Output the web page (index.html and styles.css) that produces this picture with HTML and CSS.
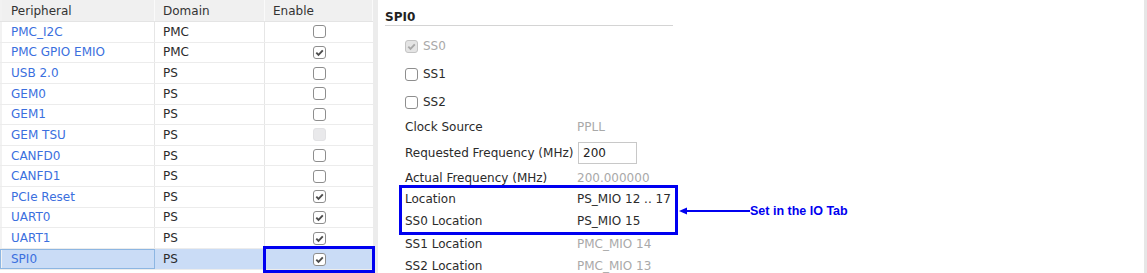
FILE: index.html
```html
<!DOCTYPE html>
<html lang="en">
<head>
    <meta charset="UTF-8">
    <title>SPI0 - Peripheral Configuration</title>
    <link rel="stylesheet" href="styles.css">
</head>
<body>
    <!-- shared checkbox shapes -->
    <svg class="defs" width="0" height="0">
        <symbol id="box" viewBox="0 0 13 13">
            <rect x="0.5" y="0.5" width="12" height="12" rx="2.5" fill="#fff" stroke="#8e8e8e"/>
        </symbol>
        <symbol id="tick" viewBox="0 0 13 13">
            <rect x="0.5" y="0.5" width="12" height="12" rx="2.5" fill="#fff" stroke="#8e8e8e"/>
            <path d="M3.3 6.6 L5.5 8.8 L9.8 4.3" fill="none" stroke="#4d4d4d" stroke-width="1.9"/>
        </symbol>
        <symbol id="off" viewBox="0 0 13 13">
            <rect x="0.5" y="0.5" width="12" height="12" rx="2.5" fill="#e9e9eb" stroke="#e2e2e4"/>
        </symbol>
        <symbol id="tickoff" viewBox="0 0 13 13">
            <rect x="0.5" y="0.5" width="12" height="12" rx="2.5" fill="#e4e4e4" stroke="#c4c4c4"/>
            <path d="M3.3 6.6 L5.5 8.8 L9.8 4.3" fill="none" stroke="#a8a8a8" stroke-width="1.9"/>
        </symbol>
    </svg>

    <div class="page">
        <!-- peripheral list -->
        <div class="grid">
            <div class="row head">
                <div class="cell">Peripheral</div>
                <div class="cell">Domain</div>
                <div class="cell">Enable</div>
            </div>
            <div class="row"><div class="cell link">PMC_I2C</div><div class="cell">PMC</div><div class="cell chk"><svg class="cb"><use href="#box"/></svg></div></div>
            <div class="row"><div class="cell link">PMC GPIO EMIO</div><div class="cell">PMC</div><div class="cell chk"><svg class="cb"><use href="#tick"/></svg></div></div>
            <div class="row"><div class="cell link">USB 2.0</div><div class="cell">PS</div><div class="cell chk"><svg class="cb"><use href="#box"/></svg></div></div>
            <div class="row"><div class="cell link">GEM0</div><div class="cell">PS</div><div class="cell chk"><svg class="cb"><use href="#box"/></svg></div></div>
            <div class="row"><div class="cell link">GEM1</div><div class="cell">PS</div><div class="cell chk"><svg class="cb"><use href="#box"/></svg></div></div>
            <div class="row"><div class="cell link">GEM TSU</div><div class="cell">PS</div><div class="cell chk"><svg class="cb"><use href="#off"/></svg></div></div>
            <div class="row"><div class="cell link">CANFD0</div><div class="cell">PS</div><div class="cell chk"><svg class="cb"><use href="#box"/></svg></div></div>
            <div class="row"><div class="cell link">CANFD1</div><div class="cell">PS</div><div class="cell chk"><svg class="cb"><use href="#box"/></svg></div></div>
            <div class="row"><div class="cell link">PCIe Reset</div><div class="cell">PS</div><div class="cell chk"><svg class="cb"><use href="#tick"/></svg></div></div>
            <div class="row"><div class="cell link">UART0</div><div class="cell">PS</div><div class="cell chk"><svg class="cb"><use href="#tick"/></svg></div></div>
            <div class="row"><div class="cell link">UART1</div><div class="cell">PS</div><div class="cell chk"><svg class="cb"><use href="#tick"/></svg></div></div>
            <div class="row selected"><div class="cell link focus">SPI0</div><div class="cell">PS</div><div class="cell chk marked"><svg class="cb"><use href="#tick"/></svg></div></div>
        </div>

        <div class="splitter"></div>

        <!-- properties of the selected peripheral -->
        <div class="panel">
            <div class="title">SPI0</div>
            <div class="opts">
                <div class="opt dim"><svg class="cb"><use href="#tickoff"/></svg>SS0</div>
                <div class="opt"><svg class="cb"><use href="#box"/></svg>SS1</div>
                <div class="opt"><svg class="cb"><use href="#box"/></svg>SS2</div>
            </div>
            <div class="prop"><span class="label">Clock Source</span><span class="value dim">PPLL</span></div>
            <div class="prop tall"><span class="label">Requested Frequency (MHz)</span><span class="field">200</span></div>
            <div class="prop short"><span class="label">Actual Frequency (MHz)</span><span class="value dim">200.000000</span></div>
            <div class="note">
                <div class="mark">
                    <div class="prop"><span class="label">Location</span><span class="value">PS_MIO 12 .. 17</span></div>
                    <div class="prop"><span class="label">SS0 Location</span><span class="value">PS_MIO 15</span></div>
                </div>
                <svg class="arrow" width="72" height="10" viewBox="0 0 72 10">
                    <path d="M7 5 H72" stroke="#0000f0" stroke-width="2"/>
                    <path d="M1 5 L9 1.5 L9 8.5 Z" fill="#0000f0"/>
                </svg>
                <span class="hint">Set in the IO Tab</span>
            </div>
            <div class="prop"><span class="label">SS1 Location</span><span class="value dim">PMC_MIO 14</span></div>
            <div class="prop"><span class="label">SS2 Location</span><span class="value dim">PMC_MIO 13</span></div>
        </div>

        <div class="edge"></div>
    </div>
</body>
</html>
```

FILE: styles.css
```css
body {
    margin: 0;
    background: #fff;
    font-family: "DejaVu Sans", Verdana, sans-serif;
    font-size: 12px;
    color: #2b2b2b;
    overflow: hidden;
}
.defs {
    position: absolute;
}
.page {
    display: flex;
    height: 273px;
}

/* table on the left */
.grid {
    width: 373px;
    flex: none;
}
.row {
    display: grid;
    grid-template-columns: 155px 110px 108px;
    height: 20.64px;
    box-sizing: border-box;
    border-bottom: 1px solid #ececec;
}
.row.head {
    height: 22px;
    background: #f0f0f0;
    border-bottom: 1px solid #e4e4e4;
}
.cell {
    display: flex;
    align-items: center;
    padding-left: 8px;
    border-right: 1px solid #e6e6e6;
    white-space: nowrap;
    position: relative;
}
.head .cell {
    color: #333;
    border-right-color: #fafafa;
}
.cell:first-child {
    padding-left: 9px;
    border-left: 2px solid #f2f2f2;
}
.link {
    color: #3b6fde;
}
.chk {
    justify-content: center;
    padding-left: 0;
    border-right: none;
}
.cb {
    width: 13px;
    height: 13px;
    flex: none;
}
.selected {
    background: #cadcf6;
}
.focus {
    outline: 1px solid #8db6e2;
    outline-offset: -1px;
}
.marked {
    outline: 3px solid #0000f0;
    outline-offset: -1px;
    margin-top: -1px;
    margin-bottom: -2px;
}

.splitter {
    width: 5px;
    flex: none;
    background: #ececec;
}
.edge {
    width: 3px;
    flex: none;
    background: #e6e6e6;
}

/* property panel */
.panel {
    flex: 1;
    padding-left: 7px;
}
.title {
    width: 288px;
    height: 26px;
    box-sizing: border-box;
    padding-top: 10px;
    line-height: 14px;
    font-weight: bold;
    color: #222;
    border-bottom: 1px solid #d4d4d4;
}
.opts {
    margin-top: 6px;
    padding-left: 20px;
}
.opt {
    height: 28px;
    display: flex;
    align-items: center;
    gap: 5px;
}
.dim {
    color: #a9a9a9;
}
.prop {
    display: flex;
    align-items: center;
    height: 22px;
    padding-left: 20px;
    white-space: nowrap;
}
.prop.tall {
    height: 30px;
}
.prop.short {
    height: 20px;
}
.label {
    width: 172px;
    flex: none;
}
.field {
    width: 59px;
    height: 22px;
    box-sizing: border-box;
    margin-left: 1px;
    padding: 3px 4px;
    line-height: 14px;
    border: 1px solid #c8c8c8;
    color: #222;
}

/* annotation around the location rows */
.note {
    display: flex;
    align-items: center;
    margin: -3px 0 -2px 14px;
}
.mark {
    width: 273px;
    border: 3px solid #0000f0;
}
.mark .prop {
    padding-left: 3px;
}
.arrow {
    flex: none;
    margin-top: 1px;
}
.hint {
    font-family: "Liberation Sans", Arial, sans-serif;
    font-weight: bold;
    font-size: 12.5px;
    color: #0000f0;
    margin-top: 2px;
}
```
